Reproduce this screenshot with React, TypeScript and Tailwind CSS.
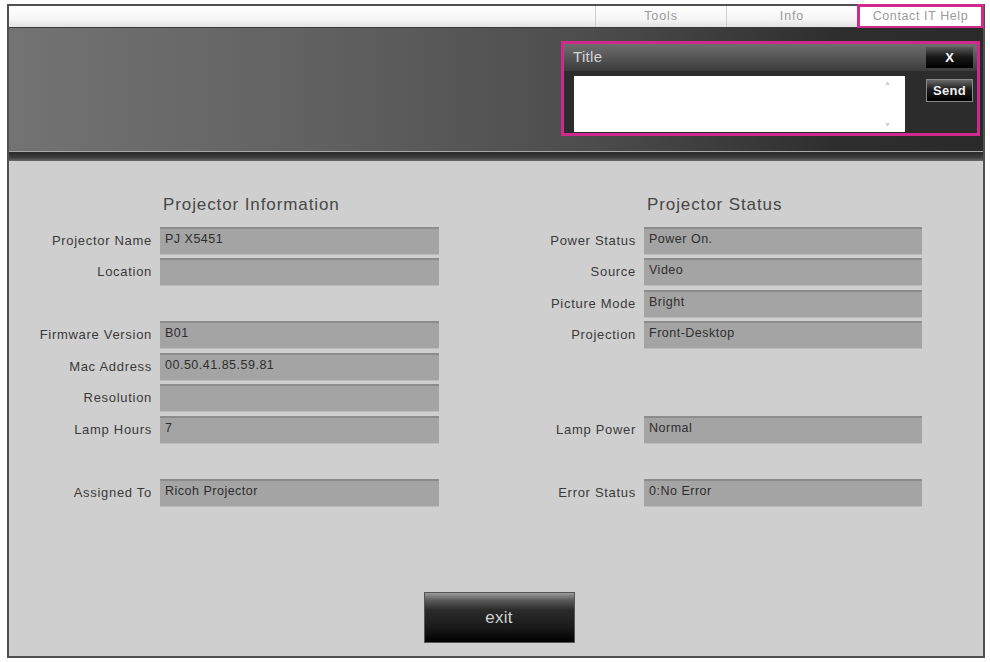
const FONT = "font-['Liberation_Sans',Arial,Helvetica,sans-serif]";

type Row = { label: string; value: string } | null;

const LEFT_ROWS: Row[] = [
  { label: "Projector Name", value: "PJ X5451" },
  { label: "Location", value: "" },
  null,
  { label: "Firmware Version", value: "B01" },
  { label: "Mac Address", value: "00.50.41.85.59.81" },
  { label: "Resolution", value: "" },
  { label: "Lamp Hours", value: "7" },
  null,
  { label: "Assigned To", value: "Ricoh Projector" },
];

const RIGHT_ROWS: Row[] = [
  { label: "Power Status", value: "Power On." },
  { label: "Source", value: "Video" },
  { label: "Picture Mode", value: "Bright" },
  { label: "Projection", value: "Front-Desktop" },
  null,
  null,
  { label: "Lamp Power", value: "Normal" },
  null,
  { label: "Error Status", value: "0:No Error" },
];

function InfoColumn({ title, rows, labelWidth, fieldWidth }: { title: string; rows: Row[]; labelWidth: string; fieldWidth: string }) {
  return (
    <div className={`grid ${labelWidth} gap-x-[8px] gap-y-[3.5px] auto-rows-[28px]`}>
      <div />
      <div className="text-[17px] leading-[20px] tracking-[0.9px] text-[#474747] pl-[3px] h-[20px] mb-[8.5px]">{title}</div>
      {rows.map((r, i) =>
        r ? (
          <Field key={i} label={r.label} value={r.value} fieldWidth={fieldWidth} />
        ) : (
          <div key={i} className="col-span-2" />
        )
      )}
    </div>
  );
}

function Field({ label, value, fieldWidth }: { label: string; value: string; fieldWidth: string }) {
  return (
    <>
      <div className="flex items-center justify-end text-[13px] tracking-[0.7px] text-[#3a3a3a] whitespace-nowrap">{label}</div>
      <div className={`${fieldWidth} h-[28px] bg-[#a4a4a4] border-t-2 border-t-[#8c8c8c] border-b border-b-[#bcbcbc] pl-[5px] pt-[1px] text-[12.5px] tracking-[0.5px] text-[#2e2e2e] whitespace-nowrap`}>
        {value}
      </div>
    </>
  );
}

export default function App() {
  return (
    <div className={`w-[990px] h-[662px] bg-white pt-[4px] pl-[7px] ${FONT}`}>
      <div className="w-[978px] h-[654px] border-2 border-[#505050] flex flex-col bg-[#cfcfcf]">
        {/* top nav */}
        <div className="h-[22px] flex justify-end bg-[linear-gradient(180deg,#ffffff_0%,#f6f6f6_60%,#e2e2e2_100%)] border-b border-b-[#3a3a3a]">
          <div className="w-[131px] flex items-center justify-center border-l border-l-[#cfcfcf] text-[12.5px] tracking-[0.9px] text-[#9a9a9a]">Tools</div>
          <div className="w-[131px] flex items-center justify-center border-l border-l-[#cfcfcf] text-[12.5px] tracking-[0.9px] text-[#9a9a9a]">Info</div>
          <div className="w-[127px] -mt-[2px] h-[25px] -mr-[1px] flex items-center justify-center border-[3px] border-[#cf2b8d] bg-white text-[12.5px] tracking-[0.6px] text-[#9a9a9a]">Contact IT Help</div>
        </div>

        {/* header band */}
        <div className="h-[123px] flex justify-end pt-[13px] pr-[3px] bg-[linear-gradient(90deg,#737373_0%,#626262_30%,#4c4c4c_60%,#2e2e2e_85%,#2a2a2a_100%)]">
          <div className="w-[419px] h-[95px] border-[3px] border-[#d0288c] bg-[#2c2c2c] flex flex-col">
            <div className="h-[27px] flex items-center justify-between pl-[9px] pr-[4px] bg-[linear-gradient(180deg,#6e6e6e_0%,#555555_50%,#3c3c3c_100%)]">
              <span className="text-[15px] tracking-[0.3px] text-[#d4d4d4]">Title</span>
              <div className="w-[47px] h-[21px] flex items-center justify-center bg-[linear-gradient(180deg,#5a5a5a_0%,#1a1a1a_45%,#000000_100%)] text-white text-[13px] font-bold">X</div>
            </div>
            <div className="flex pl-[10px] pr-[4px] pt-[5px]">
              <div className="w-[331px] h-[56px] bg-white flex flex-col items-end justify-between pr-[14px] py-[3px] text-[7px] leading-[8px] text-[#d0d0d0]">
                <span>▲</span>
                <span>▼</span>
              </div>
              <div className="ml-auto mt-[3px] w-[47px] h-[23px] flex items-center justify-center border border-[#8a8a8a] bg-[linear-gradient(180deg,#6a6a6a_0%,#1c1c1c_45%,#000000_100%)] text-[#f0f0f0] text-[13px] font-bold tracking-[0.3px]">Send</div>
            </div>
          </div>
        </div>

        {/* divider band */}
        <div className="h-[1px] bg-[#a8a8a8]" />
        <div className="h-[9px] bg-[linear-gradient(180deg,#2a2a2a_0%,#3c3c3c_60%,#6a6a6a_100%)]" />

        {/* body */}
        <div className="flex-1 flex flex-col pt-[34px] pb-[13px]">
          <div className="flex">
            <InfoColumn title="Projector Information" rows={LEFT_ROWS} labelWidth="grid-cols-[143px_279px]" fieldWidth="w-[279px]" />
            <div className="w-[7px]" />
            <InfoColumn title="Projector Status" rows={RIGHT_ROWS} labelWidth="grid-cols-[190px_278px]" fieldWidth="w-[278px]" />
          </div>
          <div className="mt-auto flex justify-center pl-[6px]">
            <div className="w-[151px] h-[51px] flex items-center justify-center border border-[#555] bg-[linear-gradient(180deg,#9a9a9a_0%,#5a5a5a_15%,#2a2a2a_35%,#1a1a1a_70%,#000000_100%)] text-[17px] tracking-[0.3px] text-[#d0d0d0]">exit</div>
          </div>
        </div>
      </div>
    </div>
  );
}
